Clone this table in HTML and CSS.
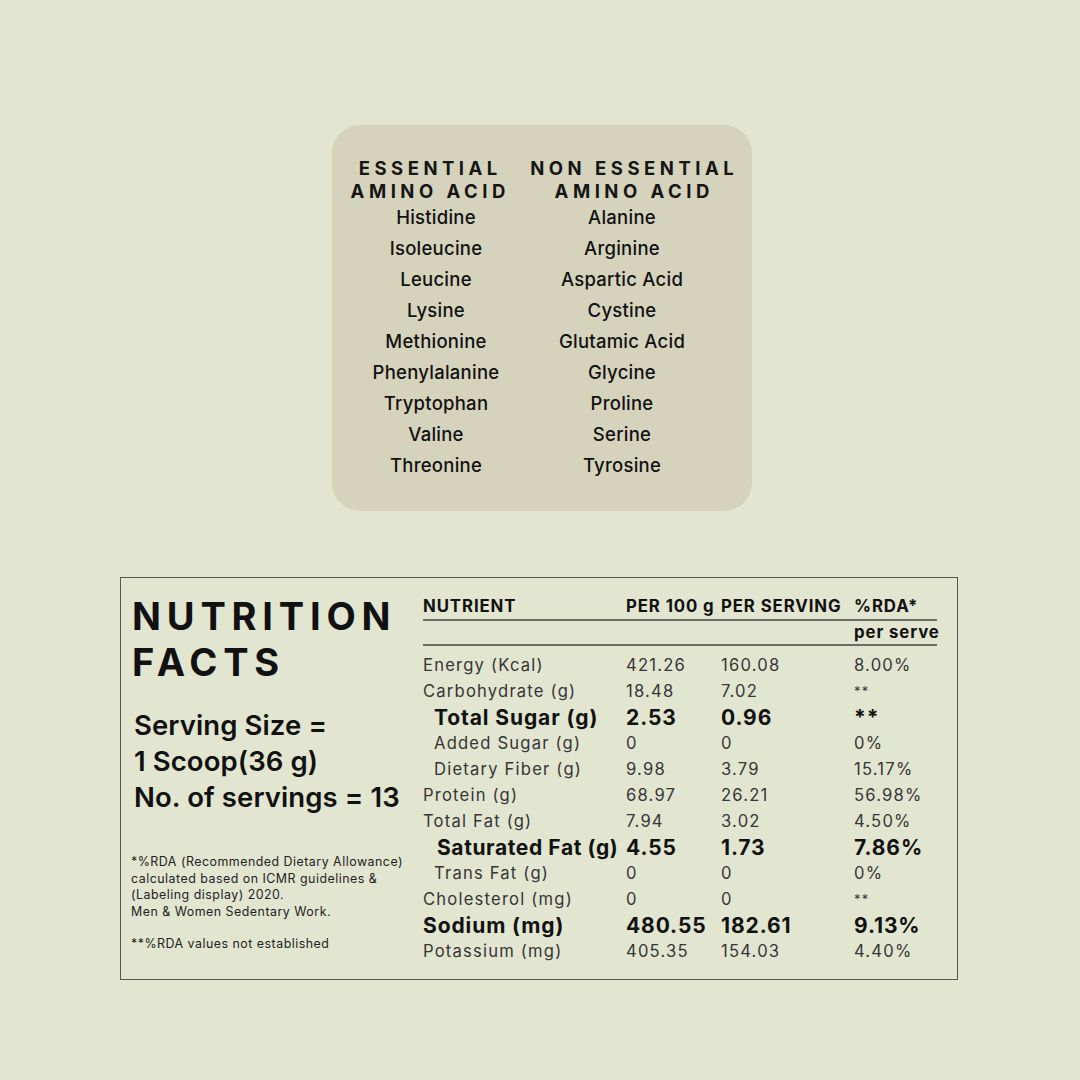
FILE: index.html
```html
<!DOCTYPE html>
<html lang="en">
<head>
<meta charset="utf-8">
<title>Nutrition Facts</title>
<link rel="stylesheet" href="styles.css">
</head>
<body>
<main class="page">
  <section class="amino">
    <div class="amino-head">
      <div class="amino-title">ESSENTIAL<br>AMINO ACID</div>
      <div class="amino-title">NON ESSENTIAL<br>AMINO ACID</div>
    </div>
    <div class="amino-list">
      <span>Histidine</span><span>Alanine</span>
      <span>Isoleucine</span><span>Arginine</span>
      <span>Leucine</span><span>Aspartic Acid</span>
      <span>Lysine</span><span>Cystine</span>
      <span>Methionine</span><span>Glutamic Acid</span>
      <span>Phenylalanine</span><span>Glycine</span>
      <span>Tryptophan</span><span>Proline</span>
      <span>Valine</span><span>Serine</span>
      <span>Threonine</span><span>Tyrosine</span>
    </div>
  </section>

  <section class="facts">
    <div class="facts-left">
      <h1 class="facts-title">NUTRITION<br>FACTS</h1>
      <p class="serving">Serving Size =<br>1 Scoop(36 g)<br>No. of servings = 13</p>
      <p class="note">*%RDA (Recommended Dietary Allowance)<br>calculated based on ICMR guidelines &amp;<br>(Labeling display) 2020.<br>Men &amp; Women Sedentary Work.</p>
      <p class="note note-2">**%RDA values not established</p>
    </div>
    <div class="facts-table">
      <div class="row head">
        <span>NUTRIENT</span><span>PER 100 g</span><span>PER SERVING</span><span>%RDA*</span>
      </div>
      <div class="row head sub">
        <span></span><span></span><span></span><span>per serve</span>
      </div>
      <div class="rows">
        <div class="row"><span>Energy (Kcal)</span><span>421.26</span><span>160.08</span><span>8.00%</span></div>
        <div class="row"><span>Carbohydrate (g)</span><span>18.48</span><span>7.02</span><span class="stars">**</span></div>
        <div class="row strong"><span class="ind">Total Sugar (g)</span><span>2.53</span><span>0.96</span><span>**</span></div>
        <div class="row"><span class="ind">Added Sugar (g)</span><span>0</span><span>0</span><span>0%</span></div>
        <div class="row"><span class="ind">Dietary Fiber (g)</span><span>9.98</span><span>3.79</span><span>15.17%</span></div>
        <div class="row"><span>Protein (g)</span><span>68.97</span><span>26.21</span><span>56.98%</span></div>
        <div class="row"><span>Total Fat (g)</span><span>7.94</span><span>3.02</span><span>4.50%</span></div>
        <div class="row strong"><span class="ind ind-2">Saturated Fat (g)</span><span>4.55</span><span>1.73</span><span>7.86%</span></div>
        <div class="row"><span class="ind">Trans Fat (g)</span><span>0</span><span>0</span><span>0%</span></div>
        <div class="row"><span>Cholesterol (mg)</span><span>0</span><span>0</span><span class="stars">**</span></div>
        <div class="row strong"><span>Sodium (mg)</span><span>480.55</span><span>182.61</span><span>9.13%</span></div>
        <div class="row"><span>Potassium (mg)</span><span>405.35</span><span>154.03</span><span>4.40%</span></div>
      </div>
    </div>
  </section>
</main>
</body>
</html>
```

FILE: styles.css
```css
* { box-sizing: border-box; }
html, body { margin: 0; padding: 0; }
body {
  background: #e2e5d0;
  font-family: Inter, "Noto Sans", "Liberation Sans", sans-serif;
  color: #111;
  width: 1080px;
  height: 1080px;
  overflow: hidden;
}
.page {
  display: flex;
  flex-direction: column;
  padding-top: 125px;
}

/* Amino acid card */
.amino {
  margin-left: 332px;
  width: 420px;
  height: 386px;
  background: #d6d3bd;
  border-radius: 28px;
  padding-top: 32px;
}
.amino-head {
  display: grid;
  grid-template-columns: 192px 216px;
}
.amino-title {
  text-align: center;
  font-weight: 700;
  font-size: 18.5px;
  line-height: 23px;
  letter-spacing: 4.5px;
  padding-left: 4.5px;
  color: #151515;
}
.amino-list {
  display: grid;
  grid-template-columns: 208px 164px;
  grid-auto-rows: 31px;
  margin-top: -1px;
}
.amino-list span {
  text-align: center;
  font-size: 18.5px;
  font-weight: 500;
  line-height: 31px;
  letter-spacing: 0.25px;
  color: #111;
}

/* Nutrition facts box */
.facts {
  margin-top: 66px;
  margin-left: 120px;
  width: 838px;
  height: 403px;
  border: 1.5px solid #56574e;
  display: flex;
}
.facts-left {
  width: 302px;
  padding-left: 11px;
  padding-top: 15px;
}
.facts-title {
  margin: 0;
  font-size: 38px;
  font-weight: 700;
  line-height: 46px;
  letter-spacing: 5.8px;
  color: #111;
}
.serving {
  margin: 22px 0 0 2px;
  font-size: 27.5px;
  font-weight: 600;
  line-height: 36px;
  letter-spacing: 0.1px;
  color: #111;
  white-space: nowrap;
}
.note {
  margin: 39px 0 0 -1px;
  font-size: 12.4px;
  line-height: 16.7px;
  letter-spacing: 0.5px;
  color: #222;
  white-space: nowrap;
}
.note-2 { margin-top: 15px; }

.facts-table {
  padding-top: 15px;
  width: 518px;
}
.row {
  display: grid;
  grid-template-columns: 203px 95px 133px 87px;
  height: 26px;
  align-items: center;
  white-space: nowrap;
  font-size: 16.6px;
  letter-spacing: 1.2px;
  color: #363636;
}
.row.head {
  height: 28px;
  font-size: 16.8px;
  font-weight: 700;
  letter-spacing: 0.9px;
  color: #111;
  border-bottom: 2px solid #6b6c63;
  width: 514px;
}
.row.head.sub {
  height: 25px;
  padding-bottom: 2px;
}
.rows { padding-top: 6px; }
.row.strong {
  font-size: 21px;
  font-weight: 700;
  letter-spacing: 0.9px;
  color: #111;
}
.stars { font-size: 13px; }
.ind { padding-left: 11px; }
.ind-2 { padding-left: 14px; letter-spacing: 0.6px; }
```
